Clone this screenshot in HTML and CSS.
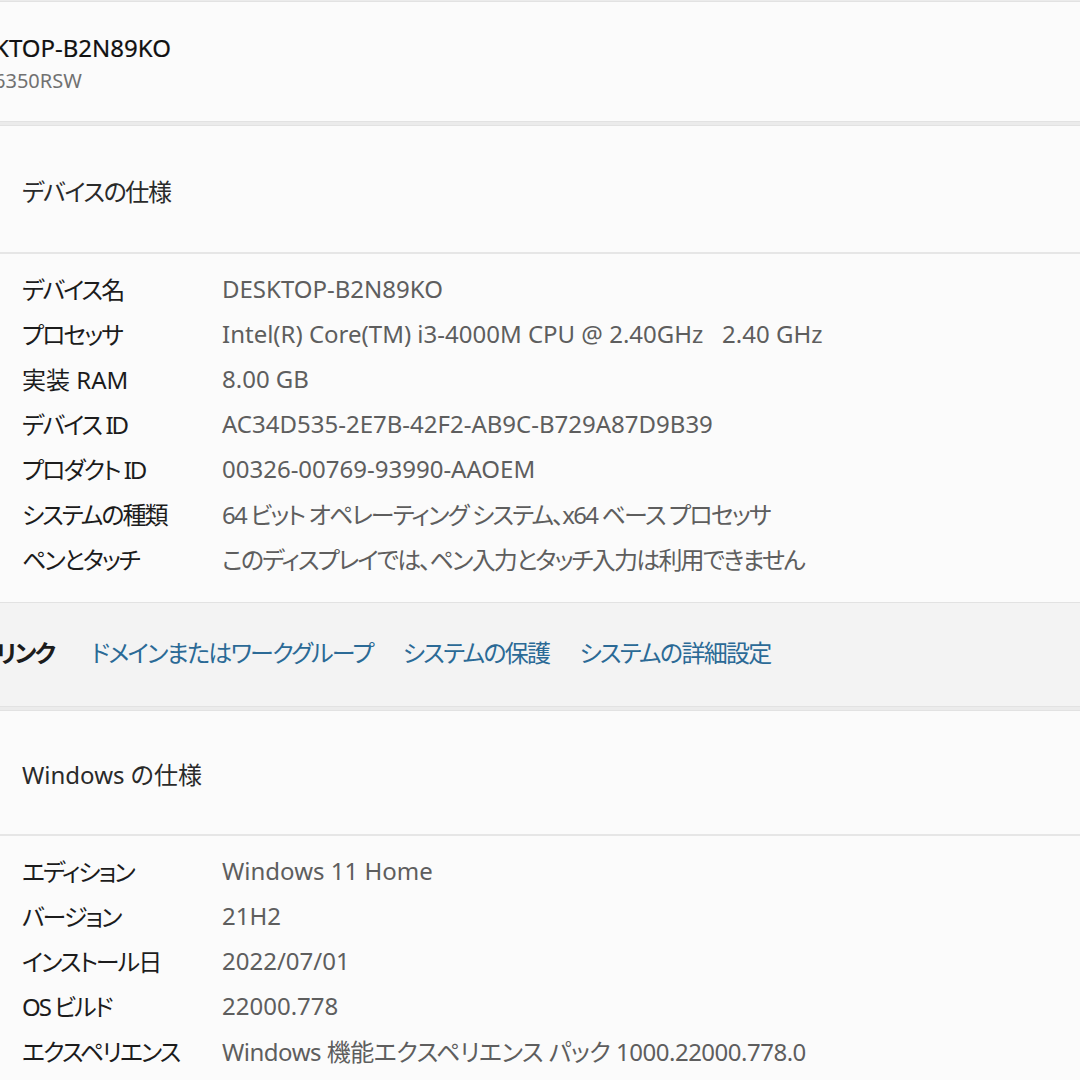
FILE: index.html
```html
<!DOCTYPE html>
<html lang="ja">
<head>
    <meta charset="UTF-8">
    <meta name="viewport" content="width=device-width, initial-scale=1.0">
    <title>バージョン情報</title>
    <link rel="stylesheet" href="styles.css">
</head>
<body>
    <div class="page">
        <section class="card device-card">
            <div class="device-name">DESKTOP-B2N89KO</div>
            <div class="device-model">6350RSW</div>
        </section>

        <section class="card">
            <div class="card-header ja">デバイスの仕様</div>
            <dl class="spec-list">
                <div class="spec-row"><dt>デバイス名</dt><dd>DESKTOP-B2N89KO</dd></div>
                <div class="spec-row"><dt>プロセッサ</dt><dd class="keep-spaces">Intel(R) Core(TM) i3-4000M CPU @ 2.40GHz   2.40 GHz</dd></div>
                <div class="spec-row"><dt class="plain">実装 RAM</dt><dd>8.00 GB</dd></div>
                <div class="spec-row"><dt>デバイス ID</dt><dd>AC34D535-2E7B-42F2-AB9C-B729A87D9B39</dd></div>
                <div class="spec-row"><dt>プロダクト ID</dt><dd>00326-00769-93990-AAOEM</dd></div>
                <div class="spec-row"><dt>システムの種類</dt><dd class="ja">64 ビット オペレーティング システム、x64 ベース プロセッサ</dd></div>
                <div class="spec-row"><dt>ペンとタッチ</dt><dd class="ja">このディスプレイでは、ペン入力とタッチ入力は利用できません</dd></div>
            </dl>
        </section>

        <div class="links-bar">
            <span class="links-title">関連リンク</span>
            <a href="#" class="link">ドメインまたはワークグループ</a>
            <a href="#" class="link">システムの保護</a>
            <a href="#" class="link">システムの詳細設定</a>
        </div>

        <section class="card">
            <div class="card-header">Windows の仕様</div>
            <dl class="spec-list">
                <div class="spec-row"><dt>エディション</dt><dd>Windows 11 Home</dd></div>
                <div class="spec-row"><dt>バージョン</dt><dd>21H2</dd></div>
                <div class="spec-row"><dt>インストール日</dt><dd>2022/07/01</dd></div>
                <div class="spec-row"><dt>OS ビルド</dt><dd>22000.778</dd></div>
                <div class="spec-row"><dt>エクスペリエンス</dt><dd class="mixed">Windows 機能エクスペリエンス パック 1000.22000.778.0</dd></div>
            </dl>
        </section>
    </div>
</body>
</html>
```

FILE: styles.css
```css
html, body {
    margin: 0;
    padding: 0;
    height: 100%;
    overflow: hidden;
}

body {
    font-family: "Noto Sans", "Noto Sans CJK JP", sans-serif;
    font-size: 24px;
    font-feature-settings: "palt";
    background-color: #ebebeb;
    color: #1c1c1c;
}

.page {
    display: flex;
    flex-direction: column;
    padding-top: 1px;
}

.card {
    background-color: #fbfbfb;
    border-top: 1px solid #e2e2e2;
    border-bottom: 1px solid #e2e2e2;
}

.device-card {
    padding: 30px 0 26px 0;
    margin-bottom: 3px;
}

.device-name {
    margin-left: -50px;
    font-size: 24px;
    line-height: 32px;
    color: #111;
    -webkit-text-stroke: 0.2px #111;
}

.device-model {
    margin-left: -6px;
    margin-top: 3px;
    font-size: 20px;
    line-height: 28px;
    color: #717171;
}

.card-header {
    padding: 50px 22px 44px 22px;
    line-height: 32px;
    color: #2a2a2a;
    border-bottom: 2px solid #e6e6e6;
}

.card-header.ja {
    letter-spacing: -1.4px;
}

.spec-list {
    margin: 0;
    padding: 12px 22px 21px 22px;
}

.spec-row {
    display: flex;
    height: 45px;
    align-items: center;
}

.spec-row dt {
    width: 200px;
    flex-shrink: 0;
    color: #1c1c1c;
    letter-spacing: -2px;
}

.spec-row dt.plain {
    letter-spacing: 0;
}

.spec-row dd {
    margin: 0;
    color: #5e5e5e;
    white-space: nowrap;
}

.spec-row dd.ja {
    letter-spacing: -1.8px;
}

.spec-row dd.mixed {
    letter-spacing: -0.5px;
}

.keep-spaces {
    white-space: pre !important;
}

.links-bar {
    display: flex;
    align-items: center;
    gap: 30px;
    height: 97px;
    padding-bottom: 6px;
    margin-left: -48px;
    margin-bottom: 3px;
    background-color: #f3f3f3;
    border-bottom: 1px solid #e2e2e2;
    letter-spacing: -2px;
}

.links-title {
    font-weight: bold;
    color: #1c1c1c;
    margin-right: 7px;
}

.link {
    color: #2b6a96;
    text-decoration: none;
    letter-spacing: -1.7px;
}

.card:last-child .card-header {
    padding-top: 48px;
    padding-bottom: 43px;
}
```
